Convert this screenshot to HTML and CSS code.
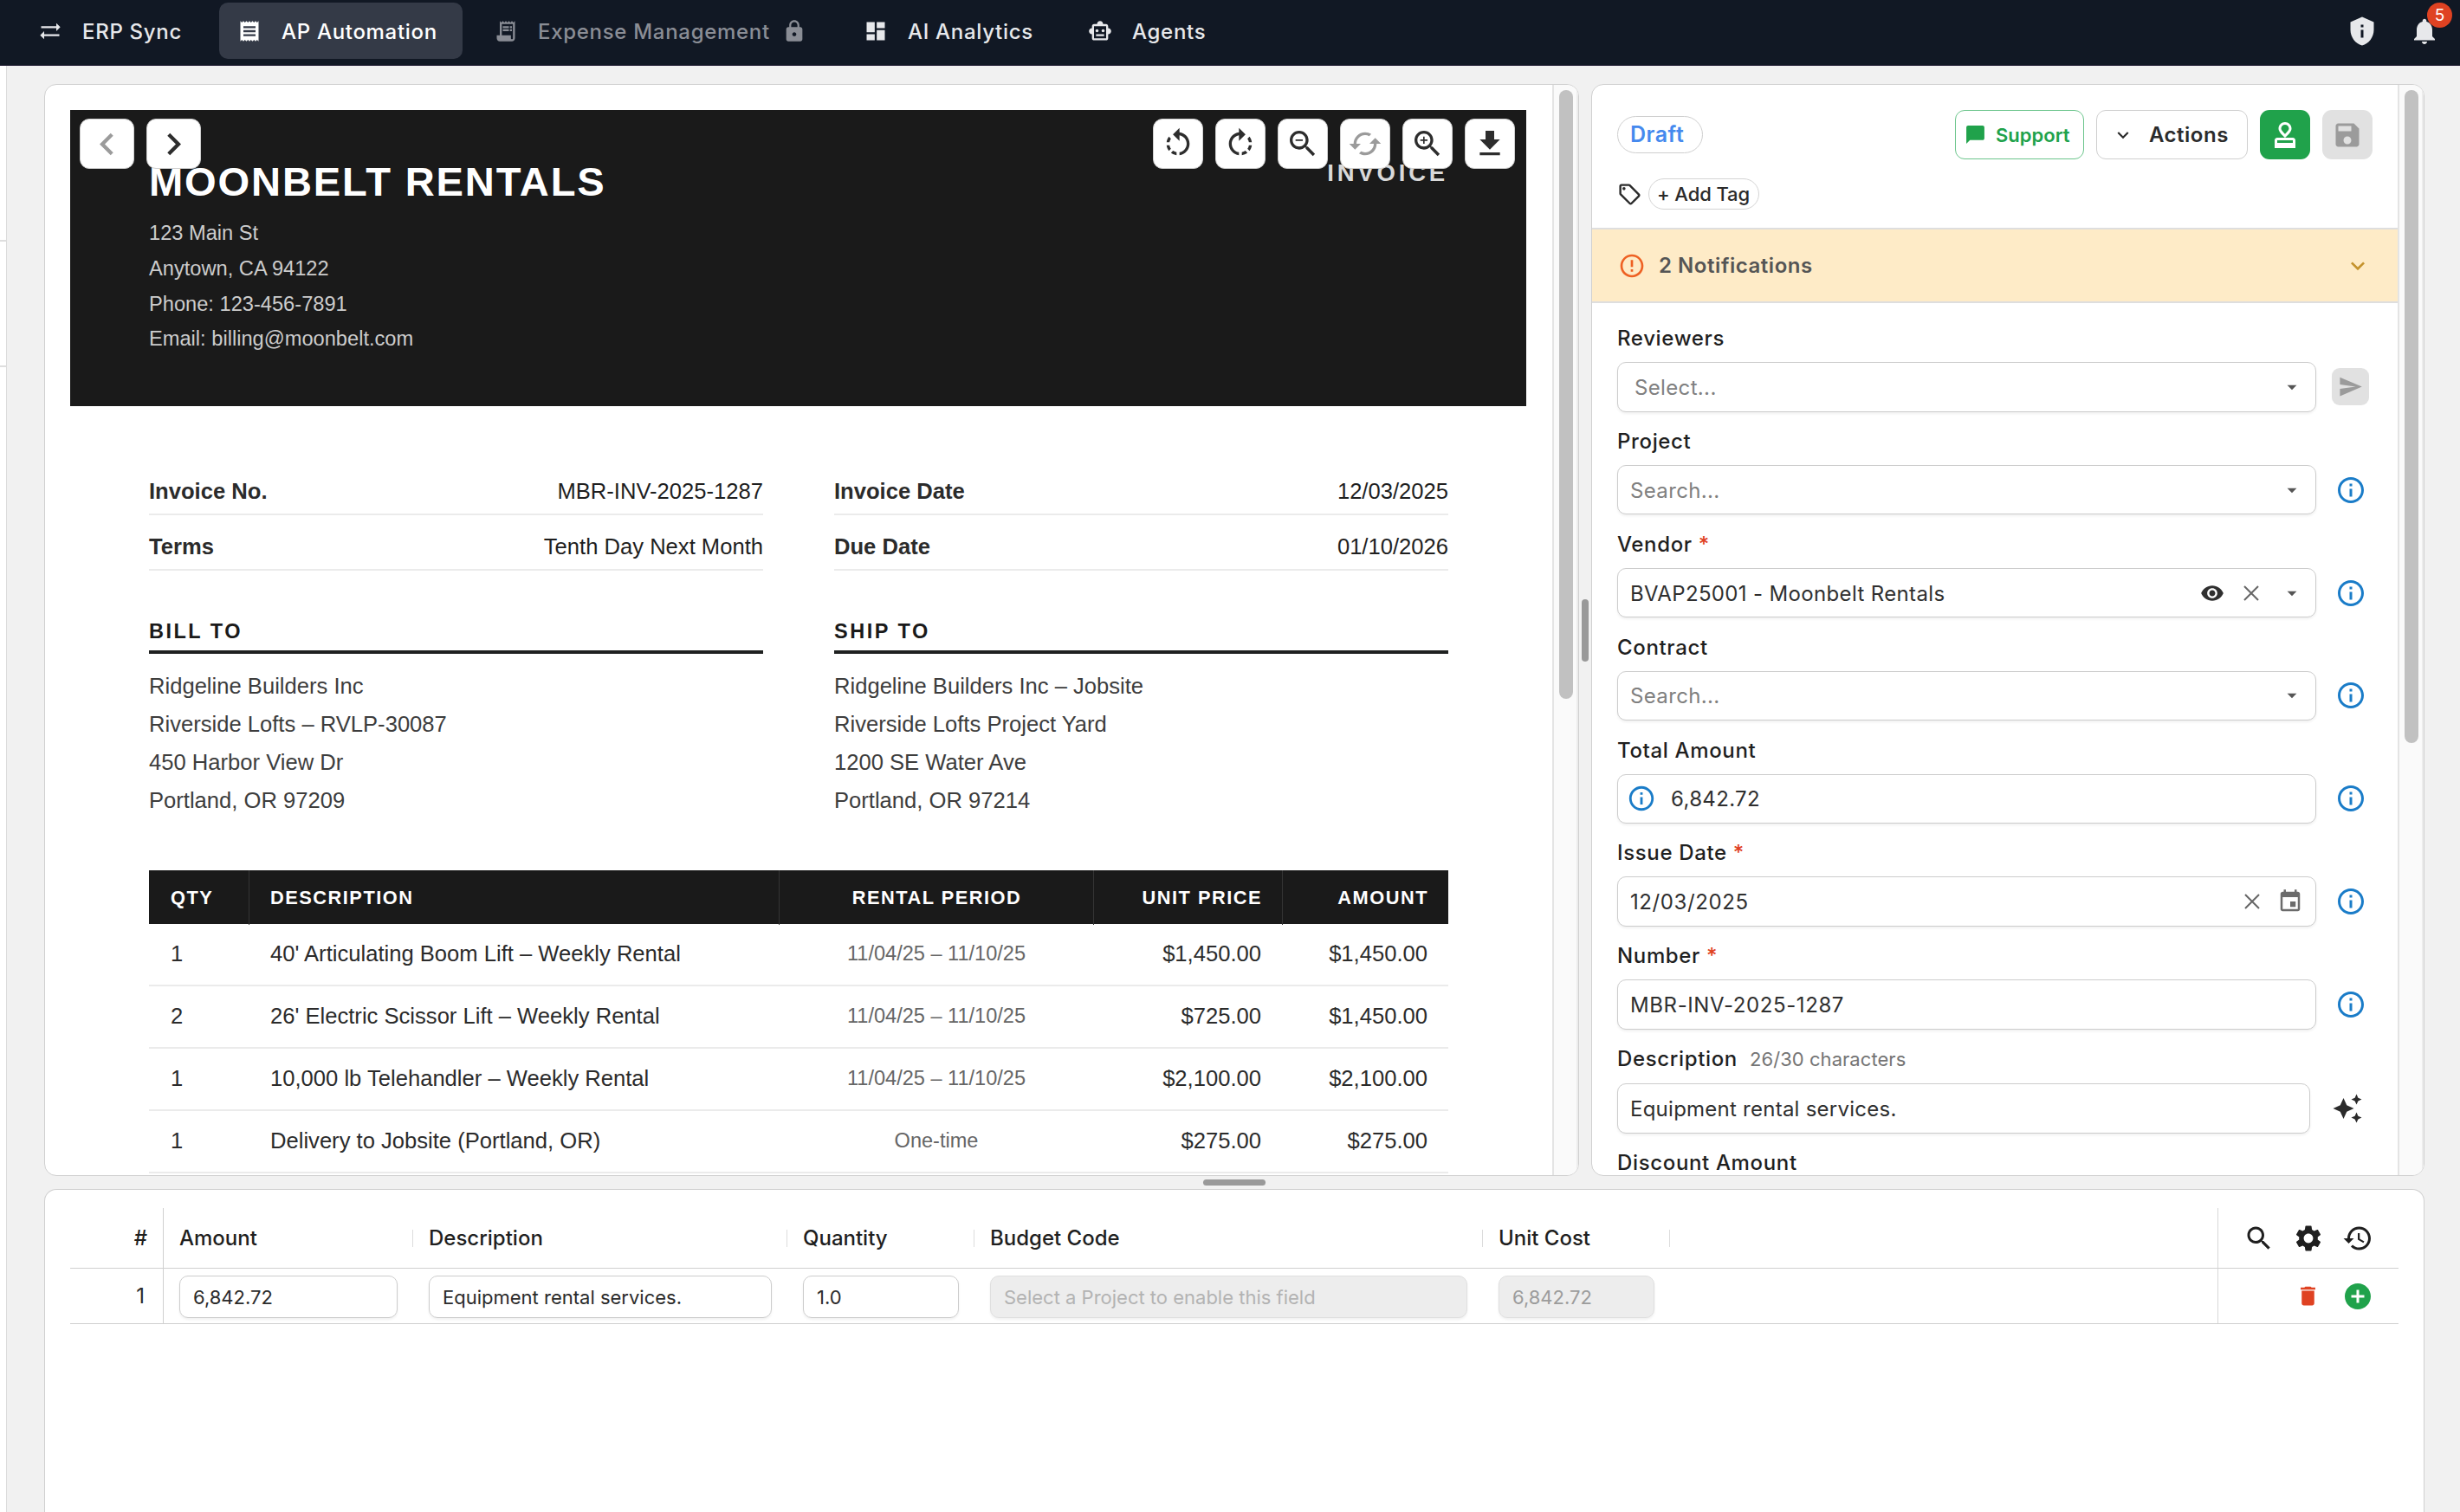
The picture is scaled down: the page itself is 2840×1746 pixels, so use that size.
FILE: index.html
```
<!DOCTYPE html>
<html lang="en">
<head>
    <meta charset="UTF-8">
    <meta name="viewport" content="width=device-width, initial-scale=1.0">
    <title>AP Automation</title>
    <link rel="stylesheet" href="styles.css">
</head>
<body>
    <!-- Icon set -->
    <svg class="icon-defs" width="0" height="0">
        <symbol id="i-sync" viewBox="0 0 24 24"><path d="M22 8l-4-4v3H3v2h15v3l4-4zM2 16l4 4v-3h15v-2H6v-3l-4 4z"/></symbol>
        <symbol id="i-receipt" viewBox="0 0 24 24"><path d="M18 17H6v-2h12v2zm0-4H6v-2h12v2zm0-4H6V7h12v2zM3 22l1.5-1.5L6 22l1.5-1.5L9 22l1.5-1.5L12 22l1.5-1.5L15 22l1.5-1.5L18 22l1.5-1.5L21 22V2l-1.5 1.5L18 2l-1.5 1.5L15 2l-1.5 1.5L12 2l-1.5 1.5L9 2 7.5 3.5 6 2 4.5 3.5 3 2v20z"/></symbol>
        <symbol id="i-receipt-long" viewBox="0 0 24 24"><path d="M19.5 3.5L18 2l-1.5 1.5L15 2l-1.5 1.5L12 2l-1.5 1.5L9 2 7.5 3.5 6 2v14H3v3c0 1.66 1.34 3 3 3h12c1.66 0 3-1.34 3-3V2l-1.5 1.5zM19 19c0 .55-.45 1-1 1s-1-.45-1-1v-3H8V5h11v14z"/><path d="M9 7h6v2H9zM16 7h2v2h-2zM9 10h6v2H9zM16 10h2v2h-2z"/></symbol>
        <symbol id="i-lock" viewBox="0 0 24 24"><path d="M18 8h-1V6c0-2.76-2.24-5-5-5S7 3.24 7 6v2H6c-1.1 0-2 .9-2 2v10c0 1.1.9 2 2 2h12c1.1 0 2-.9 2-2V10c0-1.1-.9-2-2-2zm-6 9c-1.1 0-2-.9-2-2s.9-2 2-2 2 .9 2 2-.9 2-2 2zm3.1-9H8.9V6c0-1.71 1.39-3.1 3.1-3.1 1.71 0 3.1 1.39 3.1 3.1v2z"/></symbol>
        <symbol id="i-dashboard" viewBox="0 0 24 24"><path d="M3 13h8V3H3v10zm0 8h8v-6H3v6zm10 0h8V11h-8v10zm0-18v6h8V3h-8z"/></symbol>
        <symbol id="i-robot" viewBox="0 0 24 24"><path d="M20 9V7c0-1.1-.9-2-2-2h-3c0-1.66-1.34-3-3-3S9 3.34 9 5H6c-1.1 0-2 .9-2 2v2c-1.66 0-3 1.34-3 3s1.34 3 3 3v4c0 1.1.9 2 2 2h12c1.1 0 2-.9 2-2v-4c1.66 0 3-1.34 3-3s-1.34-3-3-3zm-2 10H6V7h12v12zm-9-6c-.83 0-1.5-.67-1.5-1.5S8.17 10 9 10s1.5.67 1.5 1.5S9.83 13 9 13zm7.5-1.5c0 .83-.67 1.5-1.5 1.5s-1.5-.67-1.5-1.5.67-1.5 1.5-1.5 1.5.67 1.5 1.5zM8 15h8v2H8v-2z"/></symbol>
        <symbol id="i-shield" viewBox="0 0 24 24"><path d="M12 1L3 5v6c0 5.55 3.84 10.74 9 12 5.16-1.26 9-6.45 9-12V5l-9-4zm-1 6h2v2h-2V7zm0 4h2v6h-2v-6z"/></symbol>
        <symbol id="i-bell" viewBox="0 0 24 24"><path d="M12 22c1.1 0 2-.9 2-2h-4c0 1.1.89 2 2 2zm6-6v-5c0-3.07-1.64-5.64-4.5-6.32V4c0-.83-.67-1.5-1.5-1.5s-1.5.67-1.5 1.5v.68C7.63 5.36 6 7.92 6 11v5l-2 2v1h16v-1l-2-2z"/></symbol>
        <symbol id="i-left" viewBox="0 0 24 24"><path d="M15.41 7.41L14 6l-6 6 6 6 1.41-1.41L10.83 12z"/></symbol>
        <symbol id="i-right" viewBox="0 0 24 24"><path d="M10 6L8.59 7.41 13.17 12l-4.58 4.59L10 18l6-6z"/></symbol>
        <symbol id="i-rotate-left" viewBox="0 0 24 24"><path d="M7.11 8.53L5.7 7.11C4.8 8.27 4.24 9.61 4.07 11h2.02c.14-.87.49-1.72 1.02-2.47zM6.09 13H4.07c.17 1.39.72 2.73 1.62 3.89l1.41-1.42c-.52-.75-.87-1.59-1.01-2.47zm1.01 5.32c1.16.9 2.51 1.44 3.9 1.61V17.9c-.87-.15-1.71-.49-2.46-1.03L7.1 18.32zM13 4.07V1L8.45 5.55 13 10V6.09c2.84.48 5 2.94 5 5.91s-2.16 5.43-5 5.91v2.02c3.95-.49 7-3.85 7-7.93s-3.05-7.44-7-7.93z"/></symbol>
        <symbol id="i-rotate-right" viewBox="0 0 24 24"><path d="M15.55 5.55L11 1v3.07C7.06 4.56 4 7.92 4 12s3.05 7.44 7 7.93v-2.02c-2.84-.48-5-2.94-5-5.91s2.16-5.43 5-5.91V10l4.55-4.45zM19.93 11c-.17-1.39-.72-2.73-1.62-3.89l-1.42 1.42c.54.75.88 1.6 1.02 2.47h2.02zM13 17.9v2.02c1.39-.17 2.74-.71 3.9-1.61l-1.44-1.44c-.75.54-1.59.89-2.46 1.03zm3.89-2.42l1.42 1.41c.9-1.16 1.45-2.5 1.62-3.89h-2.02c-.14.87-.48 1.72-1.02 2.48z"/></symbol>
        <symbol id="i-zoom-out" viewBox="0 0 24 24"><path d="M15.5 14h-.79l-.28-.27C15.41 12.59 16 11.11 16 9.5 16 5.91 13.09 3 9.5 3S3 5.91 3 9.5 5.91 16 9.5 16c1.61 0 3.09-.59 4.23-1.57l.27.28v.79l5 4.99L20.49 19l-4.99-5zm-6 0C7.01 14 5 11.99 5 9.5S7.01 5 9.5 5 14 7.01 14 9.5 11.99 14 9.5 14zM7 9h5v1H7z"/></symbol>
        <symbol id="i-zoom-in" viewBox="0 0 24 24"><path d="M15.5 14h-.79l-.28-.27C15.41 12.59 16 11.11 16 9.5 16 5.91 13.09 3 9.5 3S3 5.91 3 9.5 5.91 16 9.5 16c1.61 0 3.09-.59 4.23-1.57l.27.28v.79l5 4.99L20.49 19l-4.99-5zm-6 0C7.01 14 5 11.99 5 9.5S7.01 5 9.5 5 14 7.01 14 9.5 11.99 14 9.5 14z"/><path d="M12 10h-2v2H9v-2H7V9h2V7h1v2h2v1z"/></symbol>
        <symbol id="i-reset" viewBox="0 0 24 24"><path d="M19 8l-4 4h3c0 3.31-2.69 6-6 6-1.01 0-1.97-.25-2.8-.7l-1.46 1.46C8.97 19.54 10.43 20 12 20c4.42 0 8-3.58 8-8h3l-4-4zM6 12c0-3.31 2.69-6 6-6 1.01 0 1.97.25 2.8.7l1.46-1.46C15.03 4.46 13.57 4 12 4c-4.42 0-8 3.58-8 8H1l4 4 4-4H6z"/></symbol>
        <symbol id="i-download" viewBox="0 0 24 24"><path d="M19 9h-4V3H9v6H5l7 7 7-7zM5 18v2h14v-2H5z"/></symbol>
        <symbol id="i-chat" viewBox="0 0 24 24"><path d="M20 2H4c-1.1 0-2 .9-2 2v18l4-4h14c1.1 0 2-.9 2-2V4c0-1.1-.9-2-2-2z"/></symbol>
        <symbol id="i-stamp" viewBox="0 0 24 24"><path fill-rule="evenodd" d="M4 16v6h16v-6c0-1.1-.9-2-2-2H6c-1.1 0-2 .9-2 2zm2 0h12v2H6v-2zM12 2C9.24 2 7 4.24 7 7c0 2.5 3 5.2 5 7 2-1.8 5-4.5 5-7 0-2.76-2.24-5-5-5zm0 9.200C10.8 9.9 9 8.2 9 7c0-1.66 1.34-3 3-3s3 1.34 3 3c0 1.2-1.8 2.9-3 4.2z"/></symbol>
        <symbol id="i-save" viewBox="0 0 24 24"><path d="M17 3H5c-1.11 0-2 .9-2 2v14c0 1.1.89 2 2 2h14c1.1 0 2-.9 2-2V7l-4-4zm-5 16c-1.66 0-3-1.34-3-3s1.34-3 3-3 3 1.34 3 3-1.34 3-3 3zm3-10H5V5h10v4z"/></symbol>
        <symbol id="i-tag" viewBox="0 0 24 24"><path d="M21.41 11.41l-8.83-8.83c-.37-.37-.88-.58-1.41-.58H4c-1.1 0-2 .9-2 2v7.17c0 .53.21 1.04.59 1.41l8.83 8.83c.78.78 2.05.78 2.83 0l7.17-7.17c.78-.78.78-2.04-.01-2.83zM12.83 20L4 11.17V4h7.17L20 12.83 12.83 20z"/><circle cx="6.5" cy="6.5" r="1.5"/></symbol>
        <symbol id="i-alert" viewBox="0 0 24 24"><path d="M11 15h2v2h-2v-2zm0-8h2v6h-2V7zm.99-5C6.47 2 2 6.48 2 12s4.47 10 9.99 10C17.52 22 22 17.52 22 12S17.52 2 11.99 2zM12 20c-4.42 0-8-3.58-8-8s3.58-8 8-8 8 3.58 8 8-3.58 8-8 8z"/></symbol>
        <symbol id="i-info" viewBox="0 0 24 24"><path d="M11 7h2v2h-2zm0 4h2v6h-2zm1-9C6.48 2 2 6.48 2 12s4.48 10 10 10 10-4.48 10-10S17.52 2 12 2zm0 18c-4.41 0-8-3.59-8-8s3.59-8 8-8 8 3.59 8 8-3.59 8-8 8z"/></symbol>
        <symbol id="i-down" viewBox="0 0 24 24"><path d="M16.59 8.59L12 13.17 7.41 8.59 6 10l6 6 6-6z"/></symbol>
        <symbol id="i-caret" viewBox="0 0 24 24"><path d="M7 10l5 5 5-5z"/></symbol>
        <symbol id="i-send" viewBox="0 0 24 24"><path d="M2.01 21L23 12 2.01 3 2 10l15 2-15 2z"/></symbol>
        <symbol id="i-eye" viewBox="0 0 24 24"><path d="M12 4.5C7 4.5 2.73 7.61 1 12c1.73 4.39 6 7.5 11 7.5s9.27-3.11 11-7.5c-1.73-4.39-6-7.5-11-7.5zM12 17c-2.76 0-5-2.24-5-5s2.24-5 5-5 5 2.24 5 5-2.24 5-5 5zm0-8c-1.66 0-3 1.34-3 3s1.34 3 3 3 3-1.34 3-3-1.34-3-3-3z"/></symbol>
        <symbol id="i-close" viewBox="0 0 24 24"><path d="M4 4l16 16M20 4L4 20" fill="none" stroke="currentColor" stroke-width="2"/></symbol>
        <symbol id="i-calendar" viewBox="0 0 24 24"><path d="M17 12h-5v5h5v-5zM16 1v2H8V1H6v2H5c-1.11 0-1.99.9-1.99 2L3 19c0 1.1.89 2 2 2h14c1.1 0 2-.9 2-2V5c0-1.1-.9-2-2-2h-1V1h-2zm3 18H5V8h14v11z"/></symbol>
        <symbol id="i-sparkle" viewBox="0 0 24 24"><path d="M19 9l1.25-2.75L23 5l-2.75-1.25L19 1l-1.25 2.75L15 5l2.75 1.25L19 9zm-7.5.5L9 4 6.5 9.5 1 12l5.5 2.5L9 20l2.5-5.5L17 12l-5.5-2.5zM19 15l-1.25 2.75L15 19l2.75 1.25L19 23l1.25-2.75L23 19l-2.75-1.25L19 15z"/></symbol>
        <symbol id="i-search" viewBox="0 0 24 24"><path d="M15.5 14h-.79l-.28-.27C15.41 12.59 16 11.11 16 9.5 16 5.91 13.09 3 9.5 3S3 5.91 3 9.5 5.91 16 9.5 16c1.61 0 3.09-.59 4.23-1.57l.27.28v.79l5 4.99L20.49 19l-4.99-5zm-6 0C7.01 14 5 11.99 5 9.5S7.01 5 9.5 5 14 7.01 14 9.5 11.99 14 9.5 14z"/></symbol>
        <symbol id="i-gear" viewBox="0 0 24 24"><path d="M19.14 12.94c.04-.3.06-.61.06-.94 0-.32-.02-.64-.07-.94l2.03-1.58c.18-.14.23-.41.12-.61l-1.92-3.32c-.12-.22-.37-.29-.59-.22l-2.39.96c-.5-.38-1.03-.7-1.62-.94l-.36-2.54c-.04-.24-.24-.41-.48-.41h-3.84c-.24 0-.43.17-.47.41l-.36 2.54c-.59.24-1.13.57-1.62.94l-2.39-.96c-.22-.08-.47 0-.59.22L2.74 8.87c-.12.21-.08.47.12.61l2.03 1.58c-.05.3-.09.63-.09.94s.02.64.07.94l-2.03 1.58c-.18.14-.23.41-.12.61l1.92 3.32c.12.22.37.29.59.22l2.39-.96c.5.38 1.03.7 1.62.94l.36 2.54c.05.24.24.41.48.41h3.84c.24 0 .44-.17.47-.41l.36-2.54c.59-.24 1.13-.56 1.62-.94l2.39.96c.22.08.47 0 .59-.22l1.92-3.32c.12-.22.07-.47-.12-.61l-2.01-1.58zM12 15.6c-1.98 0-3.6-1.62-3.6-3.6s1.62-3.6 3.6-3.6 3.6 1.62 3.6 3.6-1.62 3.6-3.6 3.6z"/></symbol>
        <symbol id="i-history" viewBox="0 0 24 24"><path d="M13 3c-4.97 0-9 4.03-9 9H1l3.89 3.89.07.14L9 12H6c0-3.87 3.13-7 7-7s7 3.13 7 7-3.13 7-7 7c-1.93 0-3.68-.79-4.94-2.06l-1.42 1.42C8.27 19.99 10.51 21 13 21c4.97 0 9-4.03 9-9s-4.03-9-9-9zm-1 5v5l4.28 2.54.72-1.21-3.5-2.08V8H12z"/></symbol>
        <symbol id="i-trash" viewBox="0 0 24 24"><path d="M6 19c0 1.1.9 2 2 2h8c1.1 0 2-.9 2-2V7H6v12zM19 4h-3.5l-1-1h-5l-1 1H5v2h14V4z"/></symbol>
        <symbol id="i-add" viewBox="0 0 24 24"><path d="M12 2C6.48 2 2 6.48 2 12s4.48 10 10 10 10-4.48 10-10S17.52 2 12 2zm5 11h-4v4h-2v-4H7v-2h4V7h2v4h4v2z"/></symbol>
    </svg>

    <nav class="navbar">
        <div class="tabs">
            <a class="tab tab-sync"><svg class="icon s28"><use href="#i-sync"/></svg>ERP Sync</a>
            <a class="tab tab-ap active"><svg class="icon s28"><use href="#i-receipt"/></svg>AP Automation</a>
            <a class="tab tab-expense locked"><svg class="icon s28"><use href="#i-receipt-long"/></svg>Expense Management<svg class="icon s28 lock"><use href="#i-lock"/></svg></a>
            <a class="tab tab-analytics"><svg class="icon s28"><use href="#i-dashboard"/></svg>AI Analytics</a>
            <a class="tab"><svg class="icon s28"><use href="#i-robot"/></svg>Agents</a>
        </div>
        <div class="nav-actions">
            <svg class="icon s36"><use href="#i-shield"/></svg>
            <div class="bell"><svg class="icon s36"><use href="#i-bell"/></svg><span class="badge">5</span></div>
        </div>
    </nav>

    <div class="app">
        <aside class="sidebar">
            <div class="side-block side-first"></div>
            <div class="side-block side-second"></div>
        </aside>
        <main class="workspace">
            <div class="top-row">
                <section class="panel doc-panel">
                    <div class="doc-view">
                        <div class="page">
                            <header class="inv-header">
                                <div>
                                    <h1 class="inv-company">MOONBELT RENTALS</h1>
                                    <p class="inv-address">123 Main St</p>
                                    <p class="inv-address">Anytown, CA 94122</p>
                                    <p class="inv-address">Phone: 123-456-7891</p>
                                    <p class="inv-address">Email: billing@moonbelt.com</p>
                                </div>
                                <div class="inv-title">INVOICE</div>
                            </header>
                            <div class="inv-body">
                                <div class="meta">
                                    <div class="meta-row"><b>Invoice No.</b><span>MBR-INV-2025-1287</span></div>
                                    <div class="meta-row"><b>Invoice Date</b><span>12/03/2025</span></div>
                                    <div class="meta-row"><b>Terms</b><span>Tenth Day Next Month</span></div>
                                    <div class="meta-row"><b>Due Date</b><span>01/10/2026</span></div>
                                </div>
                                <div class="parties">
                                    <div class="party">
                                        <h2>BILL TO</h2>
                                        <p>Ridgeline Builders Inc</p>
                                        <p>Riverside Lofts – RVLP-30087</p>
                                        <p>450 Harbor View Dr</p>
                                        <p>Portland, OR 97209</p>
                                    </div>
                                    <div class="party">
                                        <h2>SHIP TO</h2>
                                        <p>Ridgeline Builders Inc – Jobsite</p>
                                        <p>Riverside Lofts Project Yard</p>
                                        <p>1200 SE Water Ave</p>
                                        <p>Portland, OR 97214</p>
                                    </div>
                                </div>
                                <div class="items">
                                    <div class="item-row item-head"><span>QTY</span><span>DESCRIPTION</span><span class="center">RENTAL PERIOD</span><span class="right">UNIT PRICE</span><span class="right">AMOUNT</span></div>
                                    <div class="item-row"><span>1</span><span>40' Articulating Boom Lift – Weekly Rental</span><span class="center period">11/04/25 – 11/10/25</span><span class="right">$1,450.00</span><span class="right">$1,450.00</span></div>
                                    <div class="item-row"><span>2</span><span>26' Electric Scissor Lift – Weekly Rental</span><span class="center period">11/04/25 – 11/10/25</span><span class="right">$725.00</span><span class="right">$1,450.00</span></div>
                                    <div class="item-row"><span>1</span><span>10,000 lb Telehandler – Weekly Rental</span><span class="center period">11/04/25 – 11/10/25</span><span class="right">$2,100.00</span><span class="right">$2,100.00</span></div>
                                    <div class="item-row"><span>1</span><span>Delivery to Jobsite (Portland, OR)</span><span class="center period">One-time</span><span class="right">$275.00</span><span class="right">$275.00</span></div>
                                </div>
                            </div>
                        </div>
                    </div>
                    <div class="track"><div class="thumb thumb-doc"></div></div>
                    <div class="tools tools-left">
                        <button class="tool wide off"><svg class="icon s50"><use href="#i-left"/></svg></button>
                        <button class="tool wide"><svg class="icon s50"><use href="#i-right"/></svg></button>
                    </div>
                    <div class="tools tools-right">
                        <button class="tool"><svg class="icon s40"><use href="#i-rotate-left"/></svg></button>
                        <button class="tool"><svg class="icon s40"><use href="#i-rotate-right"/></svg></button>
                        <button class="tool"><svg class="icon s40"><use href="#i-zoom-out"/></svg></button>
                        <button class="tool off"><svg class="icon s40"><use href="#i-reset"/></svg></button>
                        <button class="tool"><svg class="icon s40"><use href="#i-zoom-in"/></svg></button>
                        <button class="tool"><svg class="icon s40"><use href="#i-download"/></svg></button>
                    </div>
                </section>

                <div class="gutter-v"><div class="grip-v"></div></div>

                <section class="panel form-panel">
                    <div class="form-view">
                        <div class="form-head">
                            <div class="head-row">
                                <span class="status">Draft</span>
                                <div class="head-actions">
                                    <button class="btn support"><svg class="icon s25"><use href="#i-chat"/></svg>Support</button>
                                    <button class="btn actions"><svg class="icon s26"><use href="#i-down"/></svg>Actions</button>
                                    <button class="btn square approve"><svg class="icon s36"><use href="#i-stamp"/></svg></button>
                                    <button class="btn square save"><svg class="icon s36"><use href="#i-save"/></svg></button>
                                </div>
                            </div>
                            <div class="tag-row"><svg class="icon s29"><use href="#i-tag"/></svg><span class="add-tag">+ Add Tag</span></div>
                        </div>
                        <div class="notice"><svg class="icon s32"><use href="#i-alert"/></svg><span>2 Notifications</span><svg class="icon s32 notice-arrow"><use href="#i-down"/></svg></div>
                        <div class="fields">
                            <div class="field">
                                <label>Reviewers</label>
                                <div class="field-row">
                                    <div class="input select hint"><span>Select...</span><svg class="icon s26 caret"><use href="#i-caret"/></svg></div>
                                    <div class="side"><button class="send"><svg class="icon s29"><use href="#i-send"/></svg></button></div>
                                </div>
                            </div>
                            <div class="field">
                                <label>Project</label>
                                <div class="field-row">
                                    <div class="input hint"><span>Search...</span><svg class="icon s26 caret"><use href="#i-caret"/></svg></div>
                                    <div class="side"><svg class="icon s36 info"><use href="#i-info"/></svg></div>
                                </div>
                            </div>
                            <div class="field">
                                <label>Vendor <em>*</em></label>
                                <div class="field-row">
                                    <div class="input"><span>BVAP25001 - Moonbelt Rentals</span><svg class="icon s28 eye"><use href="#i-eye"/></svg><svg class="icon s24 close"><use href="#i-close"/></svg><svg class="icon s26 caret"><use href="#i-caret"/></svg></div>
                                    <div class="side"><svg class="icon s36 info"><use href="#i-info"/></svg></div>
                                </div>
                            </div>
                            <div class="field">
                                <label>Contract</label>
                                <div class="field-row">
                                    <div class="input hint"><span>Search...</span><svg class="icon s26 caret"><use href="#i-caret"/></svg></div>
                                    <div class="side"><svg class="icon s36 info"><use href="#i-info"/></svg></div>
                                </div>
                            </div>
                            <div class="field">
                                <label>Total Amount</label>
                                <div class="field-row">
                                    <div class="input total"><svg class="icon s34 info"><use href="#i-info"/></svg><span>6,842.72</span></div>
                                    <div class="side"><svg class="icon s36 info"><use href="#i-info"/></svg></div>
                                </div>
                            </div>
                            <div class="field">
                                <label>Issue Date <em>*</em></label>
                                <div class="field-row">
                                    <div class="input date"><span class="num">12/03/2025</span><svg class="icon s24 close"><use href="#i-close"/></svg><svg class="icon s30 calendar"><use href="#i-calendar"/></svg></div>
                                    <div class="side"><svg class="icon s36 info"><use href="#i-info"/></svg></div>
                                </div>
                            </div>
                            <div class="field">
                                <label>Number <em>*</em></label>
                                <div class="field-row">
                                    <div class="input"><span class="num">MBR-INV-2025-1287</span></div>
                                    <div class="side"><svg class="icon s36 info"><use href="#i-info"/></svg></div>
                                </div>
                            </div>
                            <div class="field">
                                <label>Description <small>26/30 characters</small></label>
                                <div class="field-row desc-row">
                                    <div class="input"><span>Equipment rental services.</span></div>
                                    <div class="side"><svg class="icon s36"><use href="#i-sparkle"/></svg></div>
                                </div>
                            </div>
                            <div class="field">
                                <label>Discount Amount</label>
                            </div>
                        </div>
                    </div>
                    <div class="track"><div class="thumb thumb-form"></div></div>
                </section>
            </div>

            <div class="gutter-h"><div class="grip-h"></div></div>

            <section class="panel lines-panel">
                <div class="grid-row grid-head">
                    <div class="cell idx">#</div>
                    <div class="cell sep">Amount</div>
                    <div class="cell sep">Description</div>
                    <div class="cell sep">Quantity</div>
                    <div class="cell sep">Budget Code</div>
                    <div class="cell sep">Unit Cost</div>
                    <div></div>
                    <div class="cell tail"><svg class="icon s36"><use href="#i-search"/></svg><svg class="icon s36"><use href="#i-gear"/></svg><svg class="icon s36"><use href="#i-history"/></svg></div>
                </div>
                <div class="grid-row grid-line">
                    <div class="cell idx">1</div>
                    <div class="cell"><div class="mini">6,842.72</div></div>
                    <div class="cell"><div class="mini">Equipment rental services.</div></div>
                    <div class="cell"><div class="mini">1.0</div></div>
                    <div class="cell"><div class="mini disabled faint">Select a Project to enable this field</div></div>
                    <div class="cell"><div class="mini disabled">6,842.72</div></div>
                    <div></div>
                    <div class="cell tail"><svg class="icon s29 trash"><use href="#i-trash"/></svg><svg class="icon s36 add"><use href="#i-add"/></svg></div>
                </div>
            </section>
        </main>
    </div>
</body>
</html>
```
FILE: styles.css
```
* {
    box-sizing: border-box;
    margin: 0;
    padding: 0;
}
body {
    height: 1746px;
    overflow: hidden;
    background-color: #f1f1f1;
    color: #2b2b2b;
    font-family: Inter, sans-serif;
    font-size: 24px;
    display: flex;
    flex-direction: column;
}
button {
    font-family: inherit;
    border: none;
}
.icon-defs {
    position: absolute;
}
.icon {
    display: block;
    flex: none;
    fill: currentColor;
}
.s24 { width: 24px; height: 24px; }
.s25 { width: 25px; height: 25px; }
.s26 { width: 26px; height: 26px; }
.s28 { width: 28px; height: 28px; }
.s29 { width: 29px; height: 29px; }
.s30 { width: 30px; height: 30px; }
.s32 { width: 32px; height: 32px; }
.s34 { width: 34px; height: 34px; }
.s36 { width: 36px; height: 36px; }
.s40 { width: 40px; height: 40px; }
.s50 { width: 51px; height: 51px; }

/* Navbar */
.navbar {
    height: 76px;
    flex: none;
    display: flex;
    justify-content: space-between;
    padding: 3px 23px 0;
    background-color: #111824;
    border-bottom: 1px solid #241f35;
    color: #e7e8eb;
}
.tabs {
    display: flex;
    gap: 15px;
}
.tab {
    height: 65px;
    padding: 1px 0 0 21px;
    display: flex;
    align-items: center;
    gap: 23px;
    border-radius: 10px;
    font-weight: 500;
    letter-spacing: 0.7px;
    white-space: nowrap;
}
.tab-sync { width: 215px; }
.tab-ap { width: 281px; }
.tab-expense { width: 412px; }
.tab-analytics { width: 244px; }
.tab.active {
    background-color: #343a47;
    color: #ffffff;
}
.tab.locked {
    color: #8a8d95;
}
.lock {
    margin-left: -9px;
}
.nav-actions {
    display: flex;
    gap: 36px;
    height: 66px;
    align-items: center;
}
.bell {
    position: relative;
}
.badge {
    position: absolute;
    left: 21px;
    top: -15px;
    width: 29px;
    height: 29px;
    border-radius: 50%;
    background-color: #df4222;
    color: #ffffff;
    font-size: 19px;
    line-height: 29px;
    text-align: center;
}

/* Shell */
.app {
    flex: 1;
    display: flex;
    min-height: 0;
}
.sidebar {
    width: 8px;
    background-color: #ffffff;
    border-right: 1px solid #dcdcdc;
}
.side-block {
    border-bottom: 2px solid #dedede;
}
.side-first { height: 203px; }
.side-second { height: 145px; }
.workspace {
    flex: 1;
    display: flex;
    flex-direction: column;
    padding: 21px 41px 0 43px;
}
.panel {
    background-color: #ffffff;
    border: 1px solid #d0d0d0;
    border-radius: 14px;
    overflow: hidden;
}
.top-row {
    height: 1261px;
    flex: none;
    display: flex;
}
.doc-panel {
    position: relative;
    width: 1772px;
    display: flex;
}
.doc-view {
    flex: 1;
    padding: 29px 0 0 29px;
}
.track {
    width: 30px;
    flex: none;
    padding: 6px 0 0 6px;
    background-color: #fafafa;
    border-left: 2px solid #e4e4e4;
    border-right: 2px solid #ececec;
}
.thumb {
    width: 16px;
    border-radius: 8px;
    background-color: #c1c1c1;
}
.thumb-doc { height: 703px; }
.thumb-form { height: 754px; }
.gutter-v {
    width: 14px;
    display: flex;
    align-items: center;
    justify-content: center;
}
.grip-v {
    width: 8px;
    height: 72px;
    border-radius: 4px;
    background-color: #999999;
}
.gutter-h {
    height: 15px;
    flex: none;
    display: flex;
    align-items: center;
    justify-content: center;
}
.grip-h {
    width: 72px;
    height: 7px;
    border-radius: 4px;
    background-color: #999999;
}

/* Document toolbar */
.tools {
    position: absolute;
    top: 39px;
    display: flex;
    gap: 14px;
}
.tools-left { left: 40px; }
.tools-right { right: 73px; }
.tool {
    width: 58px;
    height: 58px;
    display: flex;
    align-items: center;
    justify-content: center;
    background-color: #ffffff;
    border: 1px solid #cfcfcf;
    border-radius: 11px;
    color: #2d2d2d;
}
.tool.wide { width: 63px; }
.tool.off { color: #9b9b9b; }

/* Invoice */
.page {
    width: 1681px;
    font-family: "Liberation Sans", Arial, sans-serif;
    font-size: 25.6px;
}
.inv-header {
    height: 342px;
    display: flex;
    justify-content: space-between;
    padding: 56px 90px 0 91px;
    background-color: #1a1a1a;
    color: #ffffff;
}
.inv-company {
    font-size: 47.1px;
    line-height: 54px;
    letter-spacing: 1.85px;
    margin-bottom: 12px;
}
.inv-address {
    font-size: 23.65px;
    line-height: 40.8px;
    color: #cccccc;
}
.inv-title {
    font-size: 27.5px;
    line-height: 34px;
    font-weight: bold;
    letter-spacing: 3.8px;
    color: #d9d9d9;
}
.inv-body {
    width: 1500px;
    margin-left: 91px;
}
.meta {
    display: grid;
    grid-template-columns: 1fr 1fr;
    column-gap: 82px;
    margin-top: 62px;
}
.meta-row {
    display: flex;
    justify-content: space-between;
    padding: 18px 0 8px;
    line-height: 36px;
    border-bottom: 2px solid #ebebeb;
    color: #1f1f1f;
}
.meta-row b {
    color: #2b2b2b;
}
.parties {
    display: grid;
    grid-template-columns: 1fr 1fr;
    column-gap: 82px;
    margin-top: 55px;
}
.party h2 {
    font-size: 23.5px;
    line-height: 30px;
    letter-spacing: 2.5px;
    padding-bottom: 7px;
    margin-bottom: 15px;
    border-bottom: 4px solid #1f2120;
    color: #1a1a1a;
}
.party p {
    line-height: 44px;
    color: #3d3d3d;
}
.items {
    margin-top: 59px;
}
.item-row {
    display: grid;
    grid-template-columns: 115px 612px 363px 218px 192px;
    height: 72.1px;
    line-height: 69px;
    border-bottom: 2px solid #ebebeb;
    color: #2b2b2b;
}
.item-row span {
    padding: 0 24px 0 25px;
    white-space: nowrap;
}
.item-row .center { text-align: center; }
.item-row .right { text-align: right; }
.item-row .period {
    font-size: 23.56px;
    color: #666666;
}
.item-row.item-head {
    height: 62px;
    line-height: 63px;
    border-bottom: none;
    background-color: #1a1a1a;
    color: #ffffff;
    font-size: 21.8px;
    font-weight: bold;
    letter-spacing: 1.5px;
}
.item-head span + span {
    padding-left: 24px;
    padding-right: 23px;
    border-left: 1px solid #343434;
}

/* Form panel */
.form-panel {
    width: 962px;
    display: flex;
}
.form-view {
    flex: 1;
}
.form-head {
    padding: 29px 29px 21px 29px;
    border-bottom: 2px solid #dedede;
}
.head-row {
    display: flex;
    justify-content: space-between;
    align-items: center;
}
.status {
    width: 99px;
    height: 43px;
    padding-left: 14px;
    line-height: 41px;
    border: 1px solid #cfcfcf;
    border-radius: 22px;
    font-size: 25px;
    font-weight: 600;
    letter-spacing: 0.5px;
    color: #4589ee;
}
.head-actions {
    display: flex;
    gap: 14px;
}
.btn {
    height: 57px;
    display: flex;
    align-items: center;
    border: 1px solid #cfcfcf;
    border-radius: 11px;
    background-color: #ffffff;
    color: #2b2b2b;
    font-weight: 600;
}
.support {
    width: 149px;
    padding-left: 10px;
    gap: 11px;
    border-color: #6cc58c;
    color: #20a24b;
    font-size: 22px;
}
.actions {
    width: 175px;
    padding-left: 17px;
    gap: 17px;
    font-size: 24px;
    letter-spacing: 0.5px;
}
.square {
    width: 58px;
    border: none;
    justify-content: center;
}
.approve {
    background-color: #20a24b;
    color: #ffffff;
}
.save {
    background-color: #e1e1e1;
    color: #9b9b9b;
}
.tag-row {
    display: flex;
    align-items: center;
    gap: 7px;
    margin-top: 22px;
}
.add-tag {
    width: 128px;
    height: 36px;
    padding-left: 9px;
    line-height: 35px;
    border: 1px solid #d4d4d4;
    border-radius: 18px;
    font-size: 22px;
    font-weight: 500;
    letter-spacing: -0.1px;
    white-space: nowrap;
}
.notice {
    height: 85px;
    display: flex;
    align-items: center;
    gap: 15px;
    padding: 0 30px;
    background-color: #feebc7;
    border-bottom: 2px solid #dedede;
    color: #555555;
    font-weight: 600;
    letter-spacing: 0.55px;
}
.notice .icon { color: #ee6123; }
.notice .notice-arrow {
    margin-left: auto;
    color: #c4922c;
}
.fields {
    padding: 24px 0 0 29px;
}
.field {
    margin-bottom: 17.4px;
}
.field label {
    display: block;
    line-height: 33px;
    margin-bottom: 11px;
    font-weight: 500;
    letter-spacing: 0.65px;
    color: #1f1f1f;
    white-space: nowrap;
}
.field em {
    font-style: normal;
    color: #df4222;
}
.field small {
    margin-left: 7px;
    font-size: 22px;
    font-weight: 400;
    letter-spacing: 0.05px;
    color: #757575;
}
.field-row {
    display: flex;
    align-items: center;
    gap: 18px;
}
.input {
    width: 807px;
    height: 57.5px;
    display: flex;
    align-items: center;
    padding: 0 14px;
    background-color: #ffffff;
    border: 1px solid #cccccc;
    border-radius: 10px;
    box-shadow: 0 2px 3px rgba(0, 0, 0, 0.06);
    letter-spacing: 0.35px;
    color: #2f2f2f;
}
.input span {
    flex: 1;
    padding-top: 1px;
}
.input .num {
    letter-spacing: 0.6px;
}
.input.hint span {
    color: #808080;
}
.input.select { padding-left: 19px; }
.input.total {
    padding-left: 10px;
    gap: 17px;
}
.input.date span { padding-top: 0; }
.desc-row { gap: 22px; }
.desc-row .input {
    width: 800px;
    letter-spacing: 0.25px;
}
.caret {
    margin-left: 22px;
    color: #555555;
}
.close {
    margin-left: 19px;
    color: #666666;
}
.calendar {
    margin-left: 17px;
    color: #6b6b6b;
}
.side {
    width: 43px;
    display: flex;
    justify-content: center;
}
.desc-row .side { width: 42px; }
.info { color: #1a7cc8; }
.send {
    width: 43px;
    height: 43px;
    display: flex;
    align-items: center;
    justify-content: center;
    border-radius: 9px;
    background-color: #e1e1e1;
    color: #9b9b9b;
}

/* Line items */
.lines-panel {
    flex: 1;
    padding: 21px 29px 0;
    border-bottom: none;
    border-radius: 14px 14px 0 0;
}
.grid-row {
    display: grid;
    grid-template-columns: 108px 288px 432px 216px 587px 216px 1fr 209px;
    border-bottom: 1px solid #d0d0d0;
}
.grid-head {
    height: 70px;
    font-weight: 500;
    color: #1f1f1f;
}
.grid-line { height: 64px; }
.cell {
    display: flex;
    align-items: center;
    padding: 0 18px;
    position: relative;
}
.cell.idx {
    justify-content: flex-end;
    border-right: 1px solid #d0d0d0;
}
.grid-line .idx { padding-right: 21px; }
.cell.sep::after {
    content: "";
    position: absolute;
    right: 0;
    width: 1px;
    height: 20px;
    background-color: #dcdcdc;
}
.cell.tail {
    justify-content: flex-end;
    gap: 21px;
    padding-right: 29px;
    border-left: 1px solid #d8d8d8;
}
.mini {
    width: 100%;
    height: 49px;
    margin-top: 1px;
    padding-left: 15px;
    line-height: 48px;
    border: 1px solid #cccccc;
    border-radius: 10px;
    box-shadow: 0 2px 3px rgba(0, 0, 0, 0.06);
    font-size: 22px;
    color: #2b2b2b;
    white-space: nowrap;
}
.mini.disabled {
    background-color: #ededed;
    border-color: #dfdfdf;
    color: #9c9c9c;
}
.mini.faint { color: #b3b3b3; }
.trash {
    color: #df4222;
    margin-right: 4px;
}
.add { color: #20a24b; }
```
